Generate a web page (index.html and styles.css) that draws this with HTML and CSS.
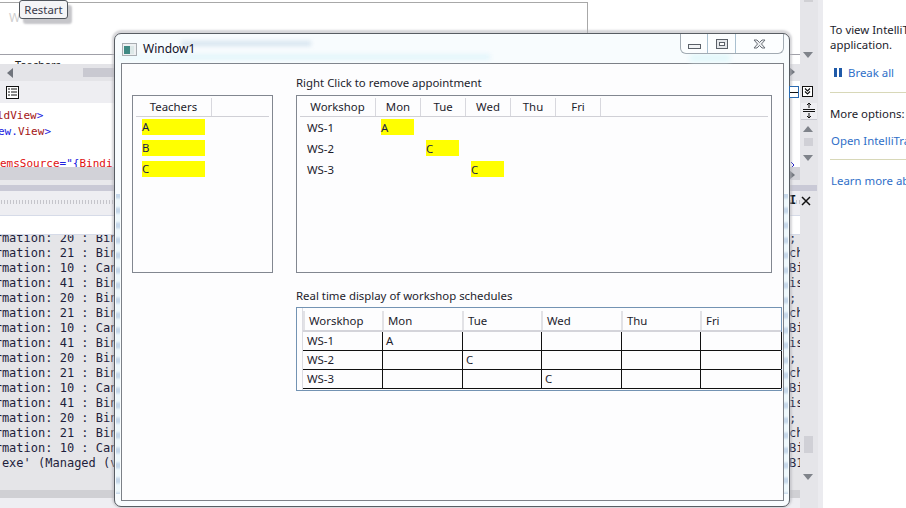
FILE: index.html
```html
<!DOCTYPE html>
<html lang="en">
<head>
<meta charset="utf-8">
<title>Window1</title>
<link rel="stylesheet" href="styles.css">
</head>
<body>
<div class="desktop">
  <div class="ide">
    <main class="editor">
      <section class="designer"><div class="design-frame"><span class="faint">W</span></div></section>
      <section class="xaml-head"><span>Teachers</span></section>
      <section class="h-scroll">
        <svg class="tri-left" width="6" height="10" viewBox="0 0 6 10"><path d="M6 0V10L0 5Z"/></svg>
        <i class="h-thumb"></i>
        <svg class="tri-right" width="6" height="10" viewBox="0 0 6 10"><path d="M0 0V10L6 5Z"/></svg>
      </section>
      <section class="toolbar">
        <svg width="13" height="13" viewBox="0 0 13 13" class="tool-icon"><rect x=".5" y=".5" width="12" height="12" fill="#fff" stroke="#111"/><path d="M2 3h2M5 3h6M2 6h2M5 6h6M2 9h2M5 9h6" stroke="#111"/></svg>
        <span class="box-minus"></span>
      </section>
      <section class="code">
        <div class="code-line l1"><b>ldView</b><u>&gt;</u></div>
        <div class="code-line l2"><u>ew.</u><b>View</b><u>&gt;</u></div>
        <div class="code-line l3"><b>emsSource</b><u>="{</u><b>Bindi</b></div>
        <svg class="caret" width="4" height="6" viewBox="0 0 4 6"><path d="M0 0L3 3L0 6" fill="none" stroke="#22c"/></svg>
      </section>
      <section class="scroll-dark">
        <i class="band-a"></i><i class="band-b"></i>
        <svg class="tri-right low" width="6" height="10" viewBox="0 0 6 10"><path d="M0 0V10L6 5Z"/></svg>
      </section>
      <section class="band-c"></section>
      <section class="grip"><i class="dots"></i><span class="pin">I</span></section>
      <section class="tabs"></section>
      <section class="output">
        <div class="out-line clip"><span>nformation: 20 : BindingExpression</span><span>;</span></div>
        <div class="out-line"><span>nformation: 21 : BindingExpression</span><span>ch</span></div>
        <div class="out-line"><span>nformation: 10 : Cannot retrieve</span><span>Bi</span></div>
        <div class="out-line"><span>nformation: 41 : BindingExpression</span><span>is</span></div>
        <div class="out-line"><span>nformation: 20 : BindingExpression</span><span>;</span></div>
        <div class="out-line"><span>nformation: 21 : BindingExpression</span><span>ch</span></div>
        <div class="out-line"><span>nformation: 10 : Cannot retrieve</span><span>Bi</span></div>
        <div class="out-line"><span>nformation: 41 : BindingExpression</span><span>is</span></div>
        <div class="out-line"><span>nformation: 20 : BindingExpression</span><span>;</span></div>
        <div class="out-line"><span>nformation: 21 : BindingExpression</span><span>ch</span></div>
        <div class="out-line"><span>nformation: 10 : Cannot retrieve</span><span>Bi</span></div>
        <div class="out-line"><span>nformation: 41 : BindingExpression</span><span>is</span></div>
        <div class="out-line"><span>nformation: 20 : BindingExpression</span><span>;</span></div>
        <div class="out-line"><span>nformation: 21 : BindingExpression</span><span>ch</span></div>
        <div class="out-line"><span>nformation: 10 : Cannot retrieve</span><span>Bi</span></div>
        <div class="out-line"><span>123.exe' (Managed (v4.0.30319)):</span><span>B1</span></div>
      </section>
      <section class="scroll-bottom"></section>
    </main>

    <aside class="strip">
      <i class="top-thumb"></i>
      <svg class="tri-down d1" width="10" height="6" viewBox="0 0 10 6"><path d="M0 0H10L5 6Z"/></svg>
      <svg class="down2" width="12" height="12" viewBox="0 0 12 12"><rect x=".5" y=".5" width="10" height="10" fill="#fff" stroke="#111"/><path d="M3 2.5L5.5 5L8 2.5M3 5.5L5.5 8L8 5.5" fill="none" stroke="#111" stroke-width="1.2"/></svg>
      <div class="split"><svg width="14" height="15" viewBox="0 0 14 15"><path d="M1 6.500H13M1 8.500H13" stroke="#111"/><path d="M7 0V5M7 10V15M5 2L7 0L9 2M5 13L7 15L9 13" fill="none" stroke="#111"/></svg></div>
      <svg class="tri-up" width="10" height="6" viewBox="0 0 10 6"><path d="M0 6H10L5 0Z"/></svg>
      <i class="mini-thumb"></i>
      <svg class="tri-down d2" width="10" height="6" viewBox="0 0 10 6"><path d="M0 0H10L5 6Z"/></svg>
      <i class="strip-band"></i>
      <svg class="close-x" width="10" height="10" viewBox="0 0 10 10"><path d="M1 1L9 9M9 1L1 9" stroke="#111" stroke-width="1.500"/></svg>
      <i class="out-thumb"></i>
      <svg class="tri-down d3" width="10" height="6" viewBox="0 0 10 6"><path d="M0 0H10L5 6Z"/></svg>
    </aside>

    <aside class="trace">
      <p class="top-text">To view IntelliTrace data, break the<br>application.</p>
      <div class="break-row"><svg width="8" height="9" viewBox="0 0 8 9"><path d="M0 0H3V9H0ZM5 0H8V9H5Z" fill="#1f5aa8"/></svg><a>Break all</a></div>
      <hr>
      <p class="more">More options:</p>
      <a class="open-link">Open IntelliTrace settings</a>
      <hr class="hr2">
      <a class="learn">Learn more about IntelliTrace</a>
    </aside>
  </div>

  <div class="restart">Restart</div>

  <div class="window">
    <i class="blur b1"></i><i class="blur b2"></i><i class="blur b3"></i><i class="blur b4"></i>
    <header class="titlebar">
      <svg class="win-icon" width="15" height="13" viewBox="0 0 15 13"><rect x=".5" y=".5" width="14" height="12" fill="#eef1f3" stroke="#a8adb2"/><rect x="2" y="3" width="6" height="8" fill="#3f8a84"/><rect x="8" y="3" width="4" height="8" fill="#dce8e8"/></svg>
      <h1>Window1</h1>
      <div class="caption">
        <div class="cap-btn min"><svg width="13" height="5" viewBox="0 0 13 5"><rect x=".5" y=".5" width="12" height="4" fill="#f2f4f6" stroke="#5a6068"/></svg></div>
        <div class="cap-btn max"><svg width="12" height="10" viewBox="0 0 12 10"><rect x=".5" y=".5" width="11" height="9" fill="#e4e7ea" stroke="#5a6068"/><rect x="3.500" y="3.500" width="5" height="3" fill="#fff" stroke="#5a6068"/></svg></div>
        <div class="cap-btn close"><svg width="13" height="10" viewBox="0 0 13 10"><path d="M1 1H4L6.500 3.500L9 1H12L8.500 5L12 9H9L6.500 6.500L4 9H1L4.500 5Z" fill="#eceef0" stroke="#6a7078"/></svg></div>
      </div>
    </header>
    <div class="client">
      <div class="top-row">
        <div class="list-box teachers">
          <div class="teach-head"><span>Teachers</span></div>
          <div class="tile-col">
            <div class="tile">A</div>
            <div class="tile">B</div>
            <div class="tile">C</div>
          </div>
        </div>
        <div class="schedule">
          <div class="caption-label">Right Click to remove appointment</div>
          <div class="list-box sched-box">
            <div class="sched-grid head">
              <span>Workshop</span><span>Mon</span><span>Tue</span><span>Wed</span><span>Thu</span><span>Fri</span>
            </div>
            <div class="sched-grid row">
              <span class="ws">WS-1</span><div class="tile">A</div>
            </div>
            <div class="sched-grid row">
              <span class="ws">WS-2</span><i></i><div class="tile">C</div>
            </div>
            <div class="sched-grid row">
              <span class="ws">WS-3</span><i></i><i></i><div class="tile">C</div>
            </div>
          </div>
        </div>
      </div>
      <div class="realtime">
        <div class="caption-label">Real time display of workshop schedules</div>
        <div class="datagrid">
          <div class="dg-row dg-head"><span>Worskhop</span><span>Mon</span><span>Tue</span><span>Wed</span><span>Thu</span><span>Fri</span></div>
          <div class="dg-row dg-body"><span>WS-1</span><span>A</span><span></span><span></span><span></span><span></span></div>
          <div class="dg-row dg-body"><span>WS-2</span><span></span><span>C</span><span></span><span></span><span></span></div>
          <div class="dg-row dg-body"><span>WS-3</span><span></span><span></span><span>C</span><span></span><span></span></div>
        </div>
      </div>
    </div>
  </div>
</div>
</body>
</html>
```

FILE: styles.css
```css
* { box-sizing: border-box; }
html, body { margin: 0; padding: 0; }
body { width: 906px; height: 508px; overflow: hidden; background: #fff; font-family: "Noto Sans", "Open Sans", sans-serif; font-size: 11.4px; color: #1c1c2c; }
i { display: block; }
.desktop { position: relative; width: 906px; height: 508px; overflow: hidden; }
.ide { display: grid; grid-template-columns: 800px 23px 83px; height: 508px; }

/* editor column */
.editor { position: relative; display: flex; flex-direction: column; height: 508px; overflow: hidden; background: #fff; }
.designer { height: 54px; padding-top: 2px; }
.design-frame { width: 588px; height: 52px; border-top: 1px solid #a8a8a8; border-right: 1px solid #a8a8a8; padding: 6px 0 0 9px; }
.faint { color: #cfcfcf; font-size: 12px; }
.xaml-head { height: 10px; border-top: 1px solid #a0a0a8; overflow: hidden; padding-left: 15px; line-height: 20px; font-size: 11px; color: #222; }
.h-scroll { height: 17px; background: #e4e4e8; display: flex; align-items: center; padding-left: 7px; position: relative; }
.h-thumb { width: 120px; height: 9px; background: #c9c9d1; margin-left: 70px; }
.tri-left { fill: #70747c; }
.tri-right { fill: #70747c; position: absolute; left: 789px; top: 3px; }
.toolbar { height: 22px; background: #eeeef2; display: flex; align-items: center; padding-left: 6px; position: relative; }
.toolbar::after { content: ""; position: absolute; left: 786px; top: 0; width: 14px; height: 22px; background: #fff; }
.box-minus { position: absolute; left: 789px; top: 5px; width: 10px; height: 12px; border: 1px solid #2a6ab0; z-index: 1; background: linear-gradient(#fff 5px, #111 5px, #111 6px, #fff 6px); }
.code { height: 64px; position: relative; font-family: "DejaVu Sans Mono", monospace; font-size: 11px; }
.code-line { position: absolute; white-space: nowrap; line-height: 16px; }
.code-line b { font-weight: normal; color: #a31515; }
.code-line u { text-decoration: none; color: #2020e0; }
.l1 { left: -3px; top: 5px; }
.l2 { left: -2px; top: 21px; }
.l3 { left: 0; top: 53px; }
.l3 b { color: #e01010; }
.caret { position: absolute; left: 791px; top: 59px; }
.scroll-dark { position: relative; height: 18px; background: #e8e8ec; }
.band-a { height: 13px; background: #d2d2d8; }
.tri-right.low { top: 3px; }
.band-b { height: 5px; background: #e8e8ec; }
.band-c { height: 6px; background: #c9c9d6; }
.grip { position: relative; height: 25px; background: #eeeef2; border-bottom: 1px solid #d6dbe8; }
.dots { position: absolute; left: 0; right: 0; top: 9px; height: 4px; background-image: radial-gradient(#9c9ca4 .7px, transparent .8px); background-size: 3px 2px; }
.pin { position: absolute; left: 789px; top: 0; font: bold 12px/19px "DejaVu Sans Mono", monospace; color: #111; }
.tabs { height: 19px; background: #fff; border-bottom: 1px solid #d6dbe8; }
.output { position: relative; height: 255px; background: #e5e5e8; overflow: hidden; font-family: "DejaVu Sans Mono", monospace; font-size: 12px; color: #1e1e3c; }
.out-line { display: flex; justify-content: space-between; height: 15px; line-height: 15px; margin-left: -27px; white-space: nowrap; }
.out-line.clip { margin-top: -4px; }
.out-line span:last-child { width: 11px; }
.scroll-bottom { flex: 1; background: #d0d0d4; border-bottom: 10px solid #eeeef2; }

/* right strip */
.strip { position: relative; height: 508px; background: #e5e5e9; border-right: 5px solid #ebebef; }
.strip > svg, .strip > i, .strip > div { position: absolute; }
.top-thumb { left: 4px; top: 0; width: 9px; height: 2px; background: #d0d0d4; }
.tri-down { fill: #7f838a; left: 3px; }
.tri-up { fill: #7f838a; left: 3px; top: 126px; }
.d1 { top: 52px; }
.d2 { top: 155px; }
.d3 { top: 474px; }
.down2 { left: 2px; top: 86px; }
.split { left: 1px; top: 103px; width: 16px; height: 17px; background: #eeeef2; border-bottom: 1px solid #c8c8d0; display: flex; justify-content: center; }
.mini-thumb { left: 4px; top: 138px; width: 9px; height: 8px; background: #d0d0d6; }
.strip-band { left: 0; top: 185px; width: 17px; height: 6px; background: #c9c9d6; }
.close-x { left: 1px; top: 196px; }
.out-thumb { left: 4px; top: 436px; width: 9px; height: 17px; background: #d0d0d6; }

/* IntelliTrace panel */
.trace { padding: 22px 0 0 7px; line-height: 15px; overflow: hidden; white-space: nowrap; }
.trace p { margin: 0; color: #1c1c2c; }
.trace a { color: #2f6fc8; }
.break-row { display: flex; align-items: center; gap: 6px; margin: 13px 0 0 4px; height: 15px; }
.trace hr { width: 76px; height: 1px; border: 0; background: #d8d8b8; margin: 12px 0 13px; }
.open-link { display: block; margin: 12px 0 0 1px; }
.trace .hr2 { margin: 11px 0 13px; }
.learn { display: block; margin-left: 1px; }

/* restart overlay */
.restart { position: absolute; left: 19px; top: 0; width: 49px; height: 19px; background: #f4f4f6; border: 1px solid #50555c; border-radius: 3px; box-shadow: 4px 5px 2px #c6c6ca; text-align: center; line-height: 18px; color: #3a3a4a; }

/* window */
.window { position: absolute; left: 114px; top: 33px; width: 676px; height: 474px; display: flex; flex-direction: column; border: 1px solid #585d63; border-radius: 7px; box-shadow: 0 -1px 2px 2px rgba(180,180,186,.55);
  background:
    repeating-linear-gradient(#c6d8ea 0, #c6d8ea 3px, #eef8fc 6px, #eef8fc 12px, #c6d8ea 15px) left 1px top 160px / 4px 300px no-repeat,
    repeating-linear-gradient(#c6d8ea 0, #c6d8ea 3px, #eef8fc 6px, #eef8fc 12px, #c6d8ea 15px) right 1px top 160px / 4px 300px no-repeat,
    #f8fcfe; }
.blur { position: absolute; filter: blur(2px); }
.b1 { left: 66px; top: 7px; width: 130px; height: 5px; background: #d6e4ef; }
.b2 { left: 55px; top: 20px; width: 320px; height: 6px; background: #e4f6fb; }
.b3 { left: 4px; top: 20px; width: 50px; height: 6px; background: #ecfafd; }
.b4 { left: 575px; top: 20px; width: 40px; height: 8px; background: #e4f8fb; }
.titlebar { position: relative; height: 29px; display: flex; align-items: flex-start; padding-left: 7px; }
.win-icon { margin-top: 9px; }
.titlebar h1 { margin: 7px 0 0 6px; font-size: 12px; font-weight: normal; line-height: 16px; color: #101028; }
.caption { margin-left: auto; margin-right: 5px; display: flex; width: 104px; height: 20px; border: 1px solid #a2abb3; border-top: 0; border-radius: 0 0 6px 6px; background: rgba(255,255,255,.6); }
.cap-btn { display: flex; justify-content: center; align-items: flex-start; }
.min { width: 27px; border-right: 1px solid #a9c0d0; padding-top: 10px; }
.max { width: 28px; border-right: 1px solid #a9c0d0; padding-top: 5px; }
.close { flex: 1; padding-top: 5px; }

.client { flex: 1; margin: 0 5px 5px 6px; background: #fdfdfe; border: 1px solid #7c8087; display: flex; flex-direction: column; }
.top-row { display: flex; padding: 31px 0 0 10px; height: 223px; }
.list-box { border: 1px solid #828790; background: #fdfdfe; height: 178px; }
.teachers { width: 141px; padding: 2px 3px 0; }
.teach-head { height: 19px; border-bottom: 1px solid #d0d0d6; }
.teach-head span { display: block; width: 76px; height: 18px; border-right: 1px solid #d8d8de; text-align: center; line-height: 17px; }
.tile-col { display: flex; flex-direction: column; gap: 5px; padding: 2px 0 0 6px; }
.tile { width: 63px; height: 16px; background: #ff0; line-height: 16px; color: #1a1a50; }
.schedule { margin-left: 23px; width: 476px; margin-top: -20px; }
.caption-label { height: 20px; line-height: 16px; color: #1c1c2c; white-space: nowrap; }
.realtime .caption-label { padding-top: 1px; }
.sched-box { padding: 2px 3px 0; height: 178px; }
.sched-grid { display: grid; grid-template-columns: 76px repeat(5, 45px); }
.sched-grid.head { height: 19px; border-bottom: 1px solid #d0d0d6; margin-bottom: 2px; }
.head span { height: 18px; text-align: center; line-height: 17px; border-right: 1px solid #d8d8de; }
.sched-grid.row { height: 16px; margin-bottom: 5px; line-height: 18px; }
.ws { padding-left: 7px; }
.row .tile { width: 33px; margin-left: 5px; line-height: 17px; }
.realtime { padding-left: 174px; }
.datagrid { width: 486px; height: 84px; border: 1px solid #7393b3; padding: 1px 0 0 7px; background: linear-gradient(90deg, transparent 5px, #dcdce2 5px, #dcdce2 6px, transparent 6px), #fdfdfe; }
.dg-row { display: grid; grid-template-columns: 79px 80px 79px 80px 79px 81px; }
.dg-head { height: 23px; border-bottom: 2px solid #d4d4da; margin-left: -1px; }
.dg-head span { border-left: 2px solid #e2e2e6; padding: 1px 0 0 4px; line-height: 17px; margin-top: 2px; }
.dg-body { height: 19px; border-bottom: 1px solid #111; line-height: 18px; margin-left: -1px; grid-template-columns: 80px 80px 79px 80px 79px 81px; }
.dg-body span { border-right: 1px solid #111; padding-left: 3px; }
.dg-body span:first-child { padding-left: 4px; }
```
